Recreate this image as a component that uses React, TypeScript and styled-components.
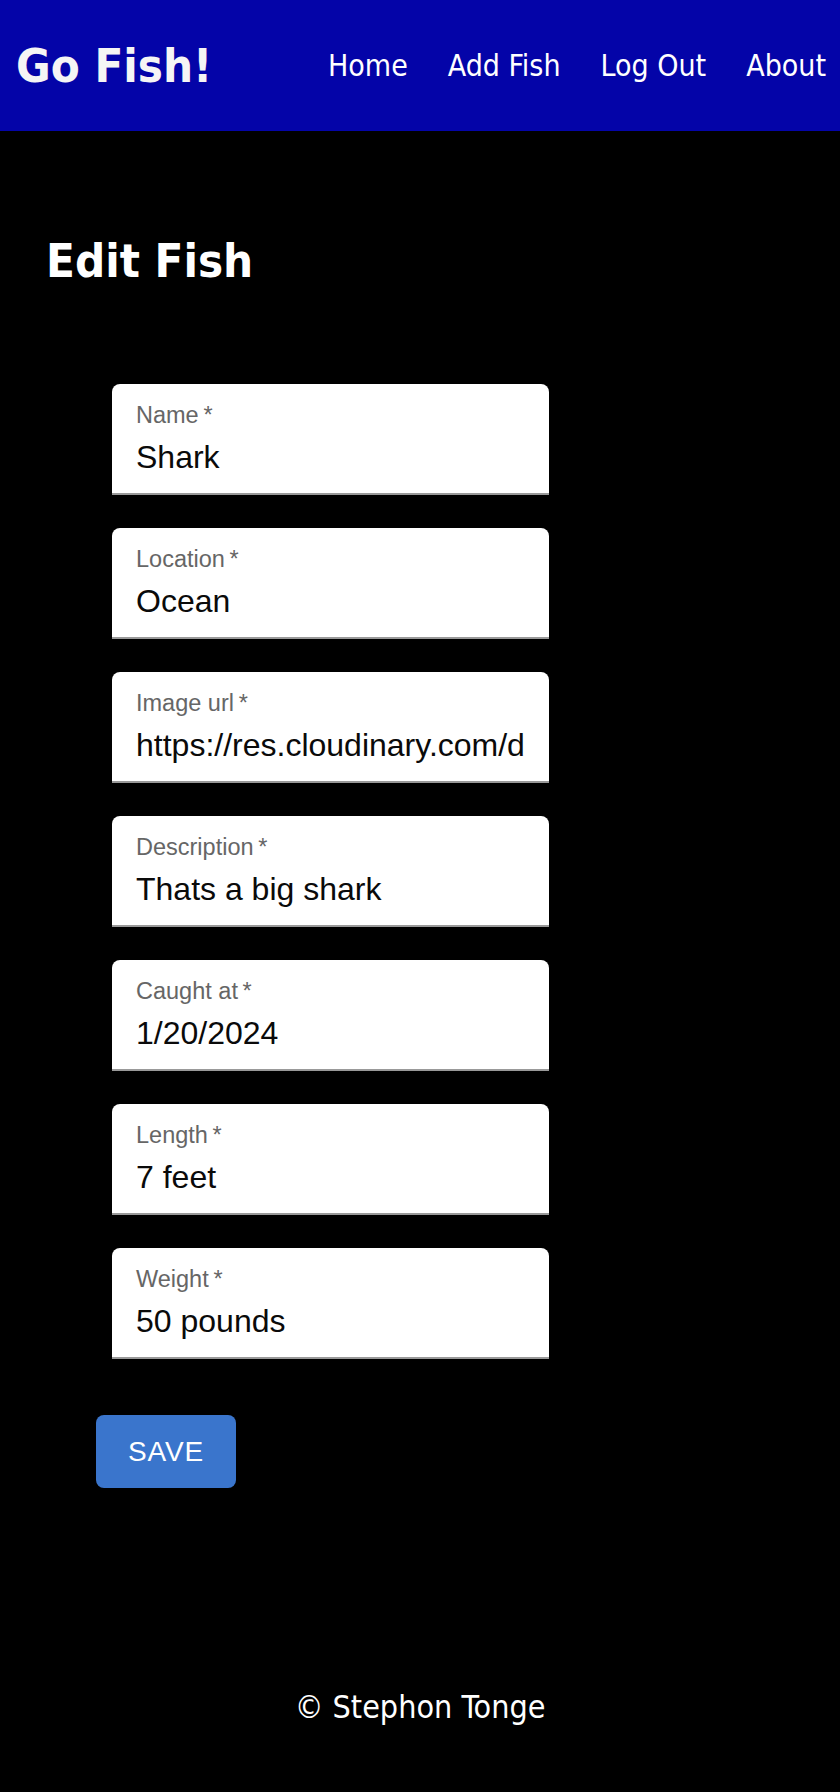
import React from "react";
import styled, { createGlobalStyle } from "styled-components";

const GlobalStyle = createGlobalStyle`
  html, body {
    margin: 0;
    padding: 0;
    background: #000;
  }
  * { box-sizing: border-box; }
`;

const Page = styled.div`
  min-height: 1792px;
  background: #000;
  display: flex;
  flex-direction: column;
  font-family: "DejaVu Sans Condensed", "DejaVu Sans", Verdana, sans-serif;
  font-stretch: condensed;
`;

const Header = styled.header`
  height: 131px;
  background: #0404a8;
  display: flex;
  align-items: center;
  justify-content: space-between;
  padding: 0 14px 0 16px;
`;

const Brand = styled.div`
  color: #f5f5f5;
  font-size: 47px;
  font-weight: 700;
  line-height: 47px;
`;

const Nav = styled.nav`
  display: flex;
  align-items: center;
  gap: 40px;
`;

const NavLink = styled.a`
  color: #fff;
  font-size: 30px;
  line-height: 30px;
  text-decoration: none;
  cursor: pointer;
`;

const Main = styled.main`
  display: flex;
  flex-direction: column;
  padding: 0 0 0 46px;
`;

const Title = styled.h1`
  margin: 106px 0 0;
  color: #fff;
  font-size: 47px;
  line-height: 48px;
  font-weight: 700;
`;

const Form = styled.form`
  display: flex;
  flex-direction: column;
  align-items: flex-start;
  gap: 33px;
  margin: 99px 0 0 50px;
  font-family: "Liberation Sans", Arial, Helvetica, sans-serif;
`;

const Field = styled.label`
  display: flex;
  flex-direction: column;
  width: 437px;
  height: 111px;
  margin-left: 16px;
  padding: 19px 24px 0;
  background: #fff;
  border-radius: 8px 8px 0 0;
  border-bottom: 2px solid #999;
`;

const FieldLabel = styled.span`
  color: #666;
  font-size: 23.5px;
  line-height: 24px;
`;

const Input = styled.input`
  margin-top: 12px;
  border: none;
  outline: none;
  padding: 0;
  background: transparent;
  width: 100%;
  color: #0a0a0a;
  font-family: inherit;
  font-size: 32px;
  line-height: 36px;
  height: 36px;
`;

const SaveButton = styled.button`
  margin-top: 23px;
  width: 140px;
  height: 73px;
  border: none;
  border-radius: 8px;
  background: #3a75cc;
  color: #fff;
  font-family: "Liberation Sans", Arial, sans-serif;
  font-size: 28px;
  font-weight: 500;
  letter-spacing: 0.8px;
  text-transform: uppercase;
  cursor: pointer;
`;

const Footer = styled.footer`
  margin-top: 203px;
  text-align: center;
  color: #fff;
  font-size: 32px;
  line-height: 32px;
  padding-bottom: 60px;
`;

const fields = [
  { label: "Name", value: "Shark" },
  { label: "Location", value: "Ocean" },
  {
    label: "Image url",
    value:
      "https://res.cloudinary.com/dxyz123/image/upload/v1705700000/shark.jpg",
  },
  { label: "Description", value: "Thats a big shark" },
  { label: "Caught at", value: "1/20/2024" },
  { label: "Length", value: "7 feet" },
  { label: "Weight", value: "50 pounds" },
];

export default function App() {
  return (
    <>
      <GlobalStyle />
      <Page>
        <Header>
          <Brand>Go Fish!</Brand>
          <Nav>
            <NavLink>Home</NavLink>
            <NavLink>Add Fish</NavLink>
            <NavLink>Log Out</NavLink>
            <NavLink>About</NavLink>
          </Nav>
        </Header>
        <Main>
          <Title>Edit Fish</Title>
          <Form onSubmit={(e) => e.preventDefault()}>
            {fields.map((f) => (
              <Field key={f.label}>
                <FieldLabel>
                  {f.label}
                  {"\u2009*"}
                </FieldLabel>
                <Input value={f.value} readOnly />
              </Field>
            ))}
            <SaveButton type="submit">Save</SaveButton>
          </Form>
        </Main>
        <Footer>© Stephon Tonge</Footer>
      </Page>
    </>
  );
}
